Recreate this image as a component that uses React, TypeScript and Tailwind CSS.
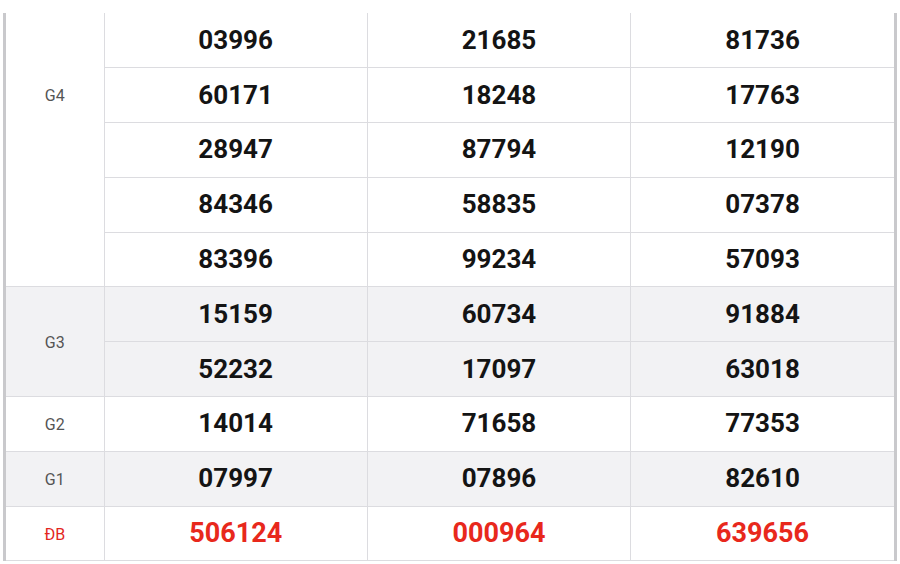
import React from 'react';

type Prize = {
  label: string;
  rows: string[][];
  shaded?: boolean;
  special?: boolean;
};

const prizes: Prize[] = [
  {
    label: 'G4',
    rows: [
      ['03996', '21685', '81736'],
      ['60171', '18248', '17763'],
      ['28947', '87794', '12190'],
      ['84346', '58835', '07378'],
      ['83396', '99234', '57093'],
    ],
  },
  {
    label: 'G3',
    shaded: true,
    rows: [
      ['15159', '60734', '91884'],
      ['52232', '17097', '63018'],
    ],
  },
  { label: 'G2', rows: [['14014', '71658', '77353']] },
  { label: 'G1', shaded: true, rows: [['07997', '07896', '82610']] },
  { label: 'ĐB', special: true, rows: [['506124', '000964', '639656']] },
];

export default function App() {
  return (
    <div className="w-[900px] h-[564px] bg-white pt-[13px] pl-[3px] font-['Roboto',sans-serif] overflow-hidden">
      <div className="w-[894px] border-x-[3px] border-[#c9c9cc]">
        <table className="w-full table-fixed border-collapse">
          <colgroup>
            <col className="w-[98px]" />
            <col />
            <col />
            <col />
          </colgroup>
          <tbody>
            {prizes.map((prize) =>
              prize.rows.map((row, i) => (
                <tr
                  key={prize.label + i}
                  className={`h-[54.8px] ${prize.shaded ? 'bg-[#f2f2f4]' : 'bg-white'}`}
                >
                  {i === 0 && (
                    <td
                      rowSpan={prize.rows.length}
                      className={`border-b border-[#dcdce0] text-center text-[16px] leading-6 ${
                        prize.rows.length > 2 ? 'align-top pt-[71px]' : 'pt-[3px]'
                      } ${prize.special ? 'text-[#e3261d]' : 'text-[#555]'}`}
                    >
                      {prize.label}
                    </td>
                  )}
                  {row.map((num, j) => (
                    <td
                      key={j}
                      className={`border-b border-l border-[#dcdce0] text-center font-bold ${
                        prize.special ? 'text-[27px] text-[#e8281c]' : 'text-[26px] text-[#141414]'
                      }`}
                    >
                      {num}
                    </td>
                  ))}
                </tr>
              ))
            )}
          </tbody>
        </table>
      </div>
    </div>
  );
}
